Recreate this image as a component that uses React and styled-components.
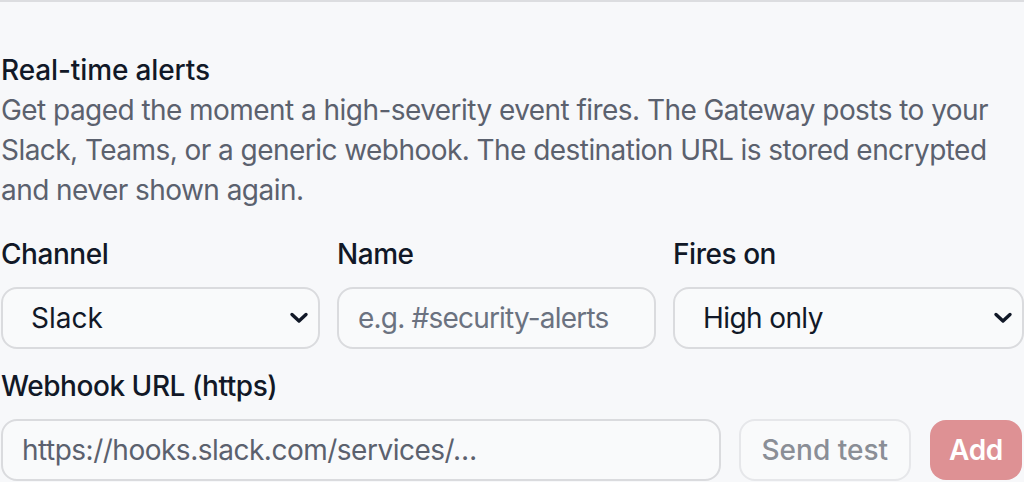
import React from "react";
import styled, { createGlobalStyle } from "styled-components";

const GlobalStyle = createGlobalStyle`
  html, body {
    margin: 0;
    padding: 0;
    background: #f7f8fa;
  }
  body {
    font-family: Inter, "Noto Sans", "Liberation Sans", sans-serif;
    -webkit-font-smoothing: antialiased;
  }
  * { box-sizing: border-box; }
`;

const Section = styled.section`
  border-top: 2px solid #dcdde0;
  padding: 48px 0 0 1px;
  width: 1024px;
  display: flex;
  flex-direction: column;
`;

const Heading = styled.h3`
  margin: 0;
  font-size: 28px;
  line-height: 40px;
  font-weight: 500;
  letter-spacing: -0.12px;
  color: #111827;
`;

const Description = styled.p`
  margin: 0;
  font-size: 28px;
  line-height: 40px;
  font-weight: 400;
  letter-spacing: -0.55px;
  color: #5b616e;
  max-width: 1000px;
`;

const FieldGrid = styled.div`
  display: grid;
  grid-template-columns: 319px 319px 351px;
  column-gap: 17px;
  margin-top: 24px;
`;

const Field = styled.label`
  display: flex;
  flex-direction: column;
  gap: 13px;
  margin-top: ${(p) => p.$top || 0}px;
`;

const Label = styled.span`
  font-size: 28px;
  line-height: 40px;
  font-weight: 500;
  letter-spacing: -0.45px;
  color: #111827;
`;

const SelectWrap = styled.div`
  position: relative;
  display: flex;
`;

const Select = styled.select`
  appearance: none;
  -webkit-appearance: none;
  width: 100%;
  height: 62px;
  border: 2px solid #dadbde;
  border-radius: 16px;
  background: #f9fafb;
  padding: 0 56px 0 28px;
  font-family: inherit;
  font-size: 28px;
  letter-spacing: ${(p) => p.$spacing || 0}px;
  color: #111827;
  outline: none;
`;

const Chevron = styled.svg`
  position: absolute;
  right: 11px;
  top: 50%;
  transform: translateY(-50%);
  pointer-events: none;
`;

const Input = styled.input`
  width: 100%;
  height: 62px;
  border: 2px solid #dadbde;
  border-radius: 16px;
  background: #f9fafb;
  padding: 0 19px;
  font-family: inherit;
  font-size: 28px;
  letter-spacing: ${(p) => p.$spacing || 0}px;
  color: #111827;
  outline: none;
  &::placeholder {
    color: ${(p) => p.$placeholderColor || "#6b7280"};
  }
`;

const UrlRow = styled.div`
  display: flex;
  gap: 18px;
  align-items: center;
  width: 1021px;
`;

const Button = styled.button`
  flex: none;
  height: ${(p) => (p.$primary ? 60 : 62)}px;
  padding: 0 ${(p) => (p.$primary ? 19 : 21)}px;
  margin-left: ${(p) => (p.$primary ? 1 : 0)}px;
  border-radius: 16px;
  border: ${(p) => (p.$primary ? "none" : "2px solid #e6e7ea")};
  background: ${(p) => (p.$primary ? "#de9194" : "#f9fafb")};
  color: ${(p) => (p.$primary ? "#ffffff" : "#8a8e96")};
  font-family: inherit;
  font-size: 28px;
  font-weight: ${(p) => (p.$primary ? 600 : 500)};
  letter-spacing: ${(p) => (p.$primary ? -0.3 : 0)}px;
  cursor: default;
`;

const ChevronIcon = () => (
  <Chevron width="20" height="12" viewBox="0 0 20 12" aria-hidden="true">
    <path d="M3 2.5 L10 9 L17 2.5" fill="none" stroke="#111827" strokeWidth="3.4" strokeLinecap="round" strokeLinejoin="round" />
  </Chevron>
);

export default function App() {
  return (
    <>
      <GlobalStyle />
      <Section>
        <Heading>Real-time alerts</Heading>
        <Description>
          Get paged the moment a high-severity event fires. The Gateway posts to your
          Slack, Teams, or a generic webhook. The destination URL is stored encrypted
          and never shown again.
        </Description>
        <FieldGrid>
          <Field>
            <Label>Channel</Label>
            <SelectWrap>
              <Select defaultValue="slack">
                <option value="slack">Slack</option>
                <option value="teams">Teams</option>
                <option value="webhook">Generic webhook</option>
              </Select>
              <ChevronIcon />
            </SelectWrap>
          </Field>
          <Field>
            <Label>Name</Label>
            <Input placeholder="e.g. #security-alerts" $spacing={-0.8} />
          </Field>
          <Field>
            <Label>Fires on</Label>
            <SelectWrap>
              <Select defaultValue="high" $spacing={-0.6}>
                <option value="high">High only</option>
                <option value="medium">Medium and above</option>
                <option value="all">All events</option>
              </Select>
              <ChevronIcon />
            </SelectWrap>
          </Field>
        </FieldGrid>
        <Field $top={17}>
          <Label>Webhook URL (https)</Label>
          <UrlRow>
            <Input placeholder="https://hooks.slack.com/services/…" $placeholderColor="#5b616e" $spacing={-0.5} />
            <Button type="button">Send test</Button>
            <Button type="button" $primary disabled>Add</Button>
          </UrlRow>
        </Field>
      </Section>
    </>
  );
}
